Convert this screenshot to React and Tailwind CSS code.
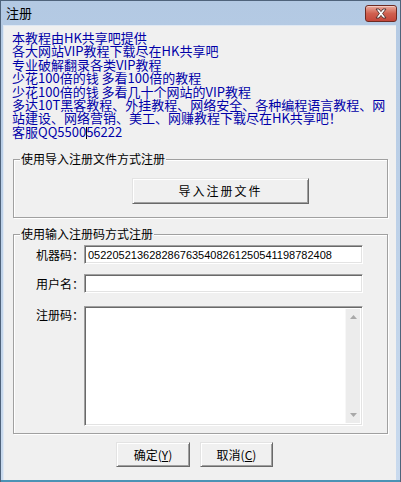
import React from "react";

const lines = [
  "本教程由HK共享吧提供",
  "各大网站VIP教程下载尽在HK共享吧",
  "专业破解翻录各类VIP教程",
  "少花100倍的钱 多看100倍的教程",
  "少花100倍的钱 多看几十个网站的VIP教程",
  "多达10T黑客教程、外挂教程、网络安全、各种编程语言教程、网",
  "站建设、网络营销、美工、网赚教程下载尽在HK共享吧！",
];

// classic raised button
const btn =
  "flex items-center justify-center bg-[#f0f0f0] border border-t-[#e3e3e3] border-l-[#e3e3e3] border-r-[#696969] border-b-[#696969] shadow-[inset_1px_1px_0_#fff,inset_-1px_-1px_0_#a0a0a0] text-[12px] text-black";

// classic sunken field
const field =
  "bg-white border border-t-[#a0a0a0] border-l-[#a0a0a0] border-r-white border-b-white shadow-[inset_1px_1px_0_#696969,inset_-1px_-1px_0_#e3e3e3]";

const CloseButton = () => (
  <div className="w-[32px] h-[17px] rounded-[3px] border border-[#6d2a22] bg-gradient-to-b from-[#e9a99c] via-[#d0604f] to-[#c4463a] flex items-center justify-center shadow-[inset_0_1px_0_#f3c9c0]">
    <svg width="14" height="11" viewBox="0 0 14 11">
      <path
        d="M2 1 L5 1 L7 3.6 L9 1 L12 1 L8.6 5.5 L12 10 L9 10 L7 7.4 L5 10 L2 10 L5.4 5.5 Z"
        fill="#fff"
        stroke="#4a2a28"
        strokeWidth="0.9"
        strokeLinejoin="round"
      />
    </svg>
  </div>
);

const GroupBox = ({ title, className, children }) => (
  <div
    className={`relative ml-[9px] w-[375px] border border-[#a0a0a0] shadow-[inset_1px_1px_0_#fff,1px_1px_0_#fff] ${className}`}
  >
    <span className="absolute left-[6px] -top-[8px] px-[1px] bg-[#f0f0f0] text-[12px] leading-[14px] text-black">
      {title}
    </span>
    {children}
  </div>
);

export default function App() {
  return (
    <div className="w-[401px] h-[482px] flex flex-col border-l border-t border-r border-[#4f637b] bg-gradient-to-b from-[#b3c9e3] to-[#c9daee] font-['Noto_Sans_CJK_SC',sans-serif] overflow-hidden">
      {/* title bar */}
      <div className="h-[24px] shrink-0 flex items-center justify-between pl-[5px] pr-[3px]">
        <span className="text-[13px] leading-[16px] text-black">注册</span>
        <CloseButton />
      </div>

      {/* client area */}
      <div className="flex-1 ml-[2px] mr-[4px] mb-[2px] bg-[#f0f0f0] border-t border-l border-[#dfe8f3] flex flex-col">
        <div className="pl-[8px] pt-[5px] text-[13px] leading-[13.4px] text-[#0000a8]">
          {lines.map((t) => (
            <div key={t} className="whitespace-pre">
              {t}
            </div>
          ))}
          <div className="whitespace-pre">
            客服QQ5500
            <span className="inline-block w-[1px] h-[12px] bg-black align-middle -mx-[0.5px]" />
            56222
          </div>
        </div>

        <GroupBox title="使用导入注册文件方式注册" className="mt-[20px] h-[59px]">
          <div className={`${btn} ml-[118px] mt-[18px] w-[177px] h-[26px] tracking-[2px]`}>
            导入注册文件
          </div>
        </GroupBox>

        <GroupBox title="使用输入注册码方式注册" className="mt-[16px] h-[200px]">
          <div className="flex flex-col gap-[10px] pt-[10px] text-[12px] text-black">
            <div className="flex items-center">
              <span className="w-[70px] pl-[22px] leading-[14px]">机器码：</span>
              <div className={`${field} w-[279px] h-[19px] flex items-center pl-[3px] font-['Liberation_Sans',sans-serif] text-[11px] leading-[12px]`}>
                0522052136282867635408261250541198782408
              </div>
            </div>
            <div className="flex items-center">
              <span className="w-[70px] pl-[22px] leading-[14px]">用户名：</span>
              <div className={`${field} w-[279px] h-[19px]`} />
            </div>
            <div className="flex items-start mt-[3px]">
              <span className="w-[70px] pl-[22px] pt-[2px] leading-[14px]">注册码：</span>
              <div className={`${field} w-[279px] h-[120px] flex justify-end p-[2px]`}>
                <div className="w-[15px] h-full bg-[#ececec] border-l border-[#f7f7f7] flex flex-col items-center justify-between py-[6px]">
                  <svg width="7" height="4" viewBox="0 0 7 4">
                    <path d="M0 4 L3.5 0 L7 4 Z" fill="#a8a8a8" />
                  </svg>
                  <svg width="7" height="4" viewBox="0 0 7 4">
                    <path d="M0 0 L3.5 4 L7 0 Z" fill="#a8a8a8" />
                  </svg>
                </div>
              </div>
            </div>
          </div>
        </GroupBox>

        <div className="flex gap-[10px] mt-[8px] ml-[112px]">
          <div className={`${btn} w-[74px] h-[25px]`}>
            确定(<span className="underline">Y</span>)
          </div>
          <div className={`${btn} w-[73px] h-[25px]`}>
            取消(<span className="underline">C</span>)
          </div>
        </div>
      </div>
      <div className="h-[2px] shrink-0 -mt-[2px] bg-[#4b93b5]" />
    </div>
  );
}
